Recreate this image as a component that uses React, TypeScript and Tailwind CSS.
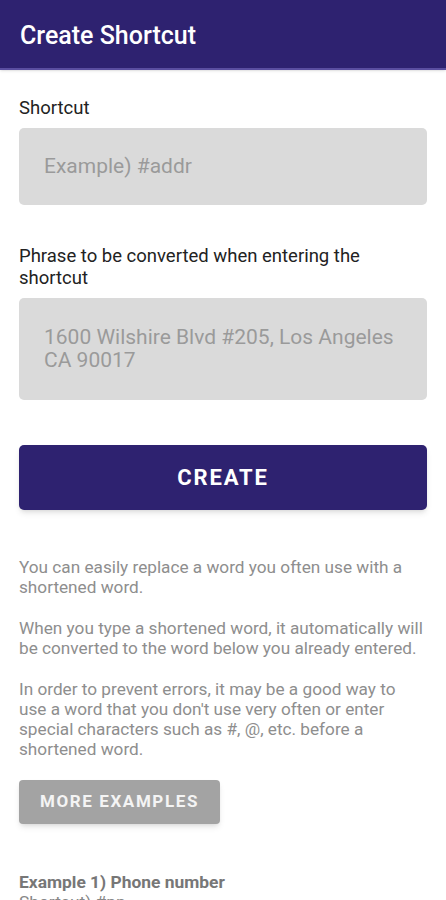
export default function App() {
  return (
    <div className="h-[900px] w-[446px] overflow-hidden bg-white font-['Roboto',sans-serif]">
      <header className="flex h-[70px] items-center border-b-2 border-[#5a4ea0] bg-[#2e2270] px-5 shadow-sm">
        <h1 className="pt-[3px] text-[25px] font-medium text-white">Create Shortcut</h1>
      </header>

      <main className="px-[19px]">
        <label className="mt-[27px] block text-[18.5px] leading-[22px] text-[#222]">Shortcut</label>
        <div className="mt-[9px] flex h-[77px] items-center rounded-[5px] bg-[#dadada] px-[25px] text-[21px] text-[#9a9a9a]">
          Example) #addr
        </div>

        <label className="mt-[40px] block pr-10 text-[18.5px] leading-[22px] text-[#222]">
          Phrase to be converted when entering the shortcut
        </label>
        <div className="mt-[9px] flex h-[102px] items-center rounded-[5px] bg-[#dadada] pl-[25px] pr-[20px] text-[21px] leading-[23px] text-[#9a9a9a]">
          1600 Wilshire Blvd #205, Los Angeles CA 90017
        </div>

        <button
          type="button"
          className="mt-[45px] flex h-[65px] w-full items-center justify-center rounded-[5px] bg-[#2e2270] text-[22px] font-bold tracking-[1.9px] text-white shadow-md"
        >
          CREATE
        </button>

        <div className="mt-[47px] space-y-[21px] text-[17.2px] leading-[20px] text-[#8e8e8e]">
          <p className="pr-4">You can easily replace a word you often use with a shortened word.</p>
          <p className="-mr-2">When you type a shortened word, it automatically will be converted to the word below you already entered.</p>
          <p className="pr-6">
            In order to prevent errors, it may be a good way to use a word that you don't use very often or enter special characters such as #, @, etc. before a shortened word.
          </p>
        </div>

        <button
          type="button"
          className="mt-[21px] flex h-[44px] w-[201px] items-center justify-center rounded-[4px] bg-[#a3a3a3] text-[17px] font-bold tracking-[1.6px] text-[#f4f4f4] shadow-md"
        >
          MORE EXAMPLES
        </button>

        <div className="mt-[48px] text-[17.4px] leading-[20px] text-[#777]">
          <p className="font-bold">Example 1) Phone number</p>
          <p className="text-[#888]">Shortcut) #pn</p>
        </div>
      </main>
    </div>
  );
}
